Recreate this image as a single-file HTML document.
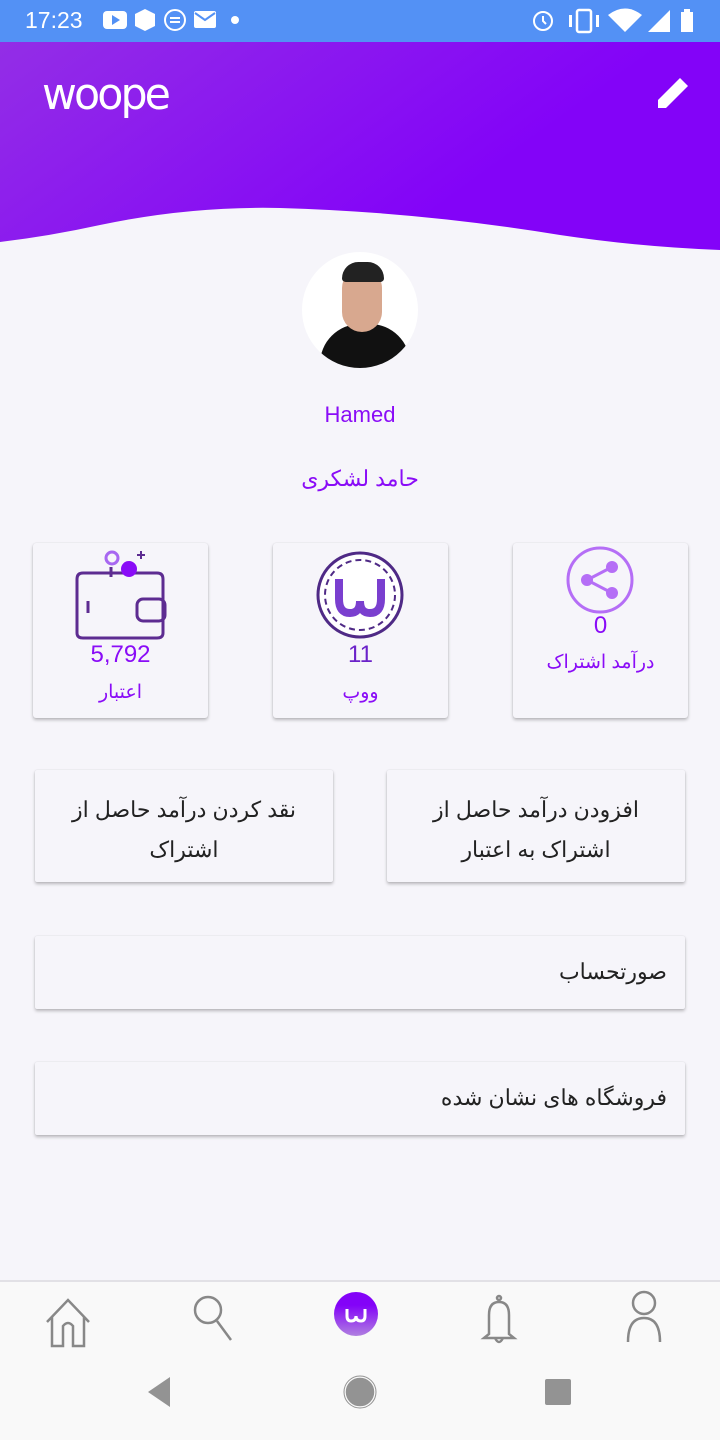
<!DOCTYPE html>
<html><head><meta charset="utf-8"><style>
*{margin:0;padding:0;box-sizing:border-box}
body{width:720px;height:1440px;background:#f6f5fa;font-family:"Liberation Sans","Noto Sans CJK SC",sans-serif;position:relative;overflow:hidden}
.status{position:absolute;top:0;left:0;width:720px;height:42px;background:#5391f5;color:#fff}
.card{position:absolute;background:#f6f5fa;border-radius:3px;box-shadow:0 2px 3px rgba(0,0,0,.25),0 0 1px rgba(0,0,0,.15)}
.p{color:#8a0cf7}
.t{position:absolute;width:100%;text-align:center}
.btn{position:absolute;background:#f6f5fa;box-shadow:0 2px 3px rgba(0,0,0,.25),0 0 1px rgba(0,0,0,.15);border-radius:2px;color:#222;font-size:22px;direction:rtl}
</style></head><body>
<div class="status">
<div style="position:absolute;left:25px;top:7px;font-size:23px">17:23</div>
<svg width="720" height="42" style="position:absolute;left:0;top:0" fill="#fff">
<rect x="103" y="11" width="24" height="18" rx="4"/><polygon points="112,15 112,25 120,20" fill="#5391f5"/>
<polygon points="145,9 155,14 155,26 145,31 135,26 135,14"/>
<circle cx="175" cy="20" r="10" fill="none" stroke="#fff" stroke-width="2"/><rect x="170" y="17" width="10" height="2"/><rect x="170" y="21" width="10" height="2"/>
<rect x="194" y="11" width="22" height="17" rx="2"/><polyline points="195,13 205,20 215,13" fill="none" stroke="#5391f5" stroke-width="2"/>
<circle cx="235" cy="20" r="4"/>
<circle cx="543" cy="21" r="9" fill="none" stroke="#fff" stroke-width="2"/><path d="M543 16V21L546 24" stroke="#fff" stroke-width="2" fill="none"/>
<rect x="577" y="10" width="14" height="22" rx="2" fill="none" stroke="#fff" stroke-width="2.5"/><rect x="569" y="15" width="3" height="12"/><rect x="596" y="15" width="3" height="12"/>
<path d="M608 15 Q625 2 642 15 L625 32Z"/>
<polygon points="648,32 670,32 670,10"/>
<rect x="681" y="12" width="12" height="20"/><rect x="684" y="9" width="6" height="3"/>
</svg></div>
<svg width="720" height="260" style="position:absolute;top:42px;left:0">
<defs><linearGradient id="g" x1="0" y1="0" x2="1" y2="0.4"><stop offset="0" stop-color="#932ee6"/><stop offset=".8" stop-color="#8303f8"/></linearGradient></defs>
<path d="M0 0H720V208Q640 205 560 193Q420 170 280 166Q190 164 100 183Q50 194 0 200Z" fill="url(#g)"/>
<text x="42" y="67" font-size="44" font-family="DejaVu Sans" fill="#fff" letter-spacing="-3" textLength="126" lengthAdjust="spacingAndGlyphs">woope</text>
<path d="M658 58 L680 36 L688 44 L666 66 L658 66Z" fill="#fff"/>
</svg>
<div style="position:absolute;left:302px;top:252px;width:116px;height:116px;border-radius:50%;background:#fff;overflow:hidden">
<div style="position:absolute;left:18px;top:72px;width:90px;height:60px;border-radius:40px 40px 0 0;background:#111"></div>
<div style="position:absolute;left:40px;top:16px;width:40px;height:64px;border-radius:20px;background:#d8a88f"></div>
<div style="position:absolute;left:40px;top:10px;width:42px;height:20px;border-radius:18px 18px 4px 4px;background:#222"></div>
</div>
<div class="t p" style="top:402px;font-size:22px">Hamed</div>
<div class="t p" style="top:466px;font-size:22px">حامد لشکری</div>

<div class="card" style="left:33px;top:543px;width:175px;height:175px">
<svg width="175" height="100" style="position:absolute;left:0;top:0"><g fill="none" stroke="#5d2c91" stroke-width="3"><path d="M50 30H70M86 30H124Q130 30 130 36V90Q130 95 124 95H50Q44 95 44 90V36Q44 30 50 30Z"/><rect x="104" y="56" width="28" height="22" rx="6"/><line x1="55" y1="58" x2="55" y2="70"/><line x1="78" y1="24" x2="78" y2="34"/></g><circle cx="79" cy="15" r="6" fill="none" stroke="#a767f1" stroke-width="3"/><circle cx="96" cy="26" r="8" fill="#8a0cf7"/><path d="M108 8V16M104 12H112" stroke="#5d2c91" stroke-width="2"/></svg>
<div class="t p" style="top:98px;font-size:24px">5,792</div>
<div class="t p" style="top:138px;font-size:19px">اعتبار</div></div>
<div class="card" style="left:273px;top:543px;width:175px;height:175px">
<svg width="175" height="100" style="position:absolute;left:0;top:0"><circle cx="87" cy="52" r="42" fill="#fff" stroke="#4f2a86" stroke-width="3"/><circle cx="87" cy="52" r="35" fill="none" stroke="#4f2a86" stroke-width="2" stroke-dasharray="6 4"/><path d="M66 36V56Q66 70 77 70Q87 70 87 58Q87 70 97 70Q108 70 108 56V36" fill="none" stroke="#7a3fcf" stroke-width="8"/></svg>
<div class="t p" style="top:98px;font-size:24px;color:#6b22c9">11</div>
<div class="t p" style="top:138px;font-size:19px">ووپ</div></div>
<div class="card" style="left:513px;top:543px;width:175px;height:175px">
<svg width="175" height="80" style="position:absolute;left:0;top:0"><circle cx="87" cy="37" r="32" fill="none" stroke="#b56ef6" stroke-width="3"/><g fill="#b56ef6"><circle cx="99" cy="24" r="6"/><circle cx="74" cy="37" r="6"/><circle cx="99" cy="50" r="6"/></g><path d="M99 24L74 37L99 50" stroke="#b56ef6" stroke-width="3" fill="none"/></svg>
<div class="t p" style="top:69px;font-size:24px">0</div>
<div class="t p" style="top:108px;font-size:19px">درآمد اشتراک</div></div>

<div class="btn" style="left:35px;top:770px;width:298px;height:112px;text-align:center;padding:20px 20px;line-height:40px">نقد کردن درآمد حاصل از اشتراک</div>
<div class="btn" style="left:387px;top:770px;width:298px;height:112px;text-align:center;padding:20px 20px;line-height:40px">افزودن درآمد حاصل از اشتراک به اعتبار</div>
<div class="btn" style="left:35px;top:936px;width:650px;height:73px;padding:22px 18px;line-height:28px">صورتحساب</div>
<div class="btn" style="left:35px;top:1062px;width:650px;height:73px;padding:22px 18px;line-height:28px">فروشگاه های نشان شده</div>

<div style="position:absolute;left:0;top:1280px;width:720px;height:160px;background:#f9f9f9;border-top:2px solid #e2e1e6"></div>
<svg width="720" height="160" style="position:absolute;left:0;top:1280px">
<g fill="none" stroke="#888" stroke-width="2.5">
<path d="M47 42L68 20L89 42M52 37V66H63V46Q68 40 73 46V66H84V37"/>
<circle cx="208" cy="30" r="13"/><line x1="217" y1="41" x2="231" y2="60"/>
<path d="M489 54V35Q489 22 499 22Q509 22 509 35V54L514 58H484Z M495 58Q499 66 503 58"/><circle cx="499" cy="18" r="2"/>
<circle cx="644" cy="23" r="11"/><path d="M628 62Q628 38 644 38Q660 38 660 62"/>
</g>
<defs><linearGradient id="b" x1="0" y1="0" x2="0" y2="1"><stop offset=".3" stop-color="#8303f8"/><stop offset="1" stop-color="#b080e0"/></linearGradient></defs>
<circle cx="356" cy="34" r="22" fill="url(#b)"/>
<path d="M347 29V36Q347 41 351 41Q356 41 356 36Q356 41 361 41Q365 41 365 36V29" fill="none" stroke="#fff" stroke-width="3"/>
<polygon points="170,97 170,127 148,112" fill="#939393"/>
<circle cx="360" cy="112" r="15" fill="#939393" stroke="#f9f9f9" stroke-width="1.5"/><circle cx="360" cy="112" r="16" fill="none" stroke="#939393" stroke-width="1"/>
<rect x="545" y="99" width="26" height="26" rx="2" fill="#939393"/>
</svg>
</body></html>
